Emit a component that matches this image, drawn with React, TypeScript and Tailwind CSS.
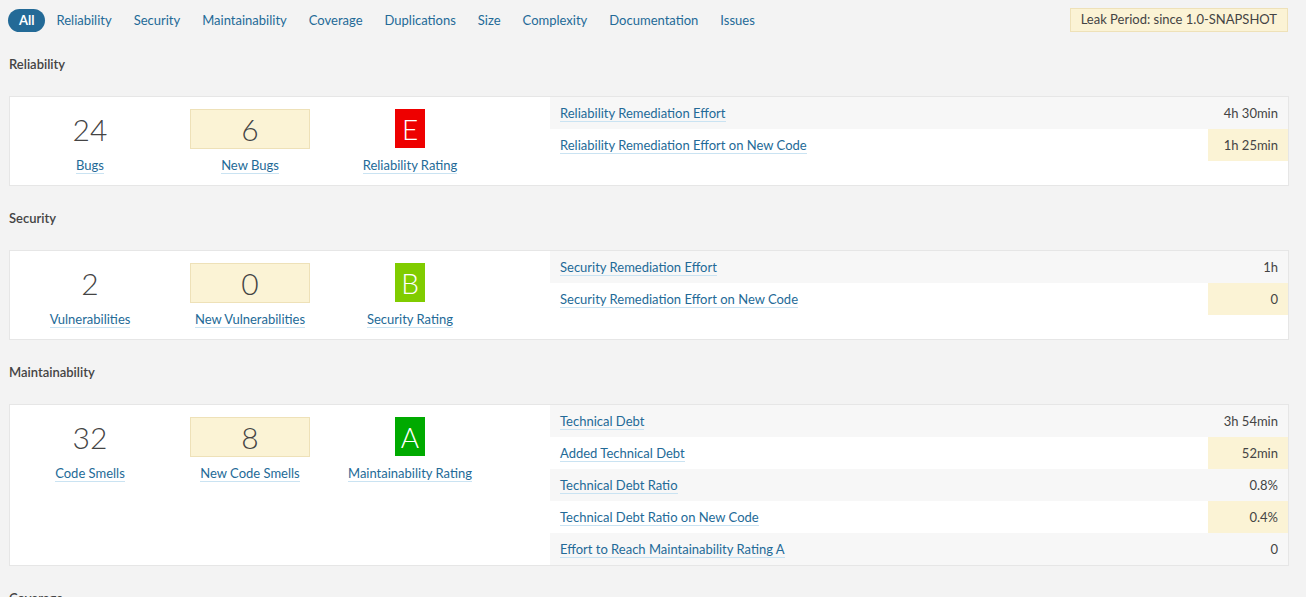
const tabs = [
  'Reliability',
  'Security',
  'Maintainability',
  'Coverage',
  'Duplications',
  'Size',
  'Complexity',
  'Documentation',
  'Issues'
]

interface Measure {
  value: string
  label: string
}

interface Row {
  label: string
  value: string
  leak?: boolean
}

interface Section {
  title: string
  total: Measure
  added: Measure
  rating: { letter: string; label: string; color: string }
  rows: Row[]
}

const sections: Section[] = [
  {
    title: 'Reliability',
    total: { value: '24', label: 'Bugs' },
    added: { value: '6', label: 'New Bugs' },
    rating: { letter: 'E', label: 'Reliability Rating', color: 'bg-[#ee0000]' },
    rows: [
      { label: 'Reliability Remediation Effort', value: '4h 30min' },
      { label: 'Reliability Remediation Effort on New Code', value: '1h 25min', leak: true }
    ]
  },
  {
    title: 'Security',
    total: { value: '2', label: 'Vulnerabilities' },
    added: { value: '0', label: 'New Vulnerabilities' },
    rating: { letter: 'B', label: 'Security Rating', color: 'bg-[#80cc00]' },
    rows: [
      { label: 'Security Remediation Effort', value: '1h' },
      { label: 'Security Remediation Effort on New Code', value: '0', leak: true }
    ]
  },
  {
    title: 'Maintainability',
    total: { value: '32', label: 'Code Smells' },
    added: { value: '8', label: 'New Code Smells' },
    rating: { letter: 'A', label: 'Maintainability Rating', color: 'bg-[#00aa00]' },
    rows: [
      { label: 'Technical Debt', value: '3h 54min' },
      { label: 'Added Technical Debt', value: '52min', leak: true },
      { label: 'Technical Debt Ratio', value: '0.8%' },
      { label: 'Technical Debt Ratio on New Code', value: '0.4%', leak: true },
      { label: 'Effort to Reach Maintainability Rating A', value: '0' }
    ]
  }
]

function Link(props: { children: React.ReactNode }) {
  return (
    <a className="border-b border-[#cae3f2] text-[#236a97] leading-[16px] cursor-pointer">
      {props.children}
    </a>
  )
}

function SectionBlock({ s }: { s: Section }) {
  return (
    <div className="pt-[22px]">
      <h3 className="px-[9px] text-[13px] font-semibold leading-5 text-[#444]">{s.title}</h3>
      <div className="ml-[9px] mr-[17px] mt-[22px] flex border border-[#e6e6e6] bg-white">
        <div className="flex w-[540px] shrink-0 items-start pt-3">
          <div className="flex w-[160px] flex-col items-center">
            <div className="flex h-10 items-center text-[30px] font-light text-[#444]">
              {s.total.value}
            </div>
            <div className="mt-[7px] text-[13px]">
              <Link>{s.total.label}</Link>
            </div>
          </div>
          <div className="flex w-[160px] flex-col items-center">
            <div className="flex h-10 w-[120px] items-center justify-center border border-[#eee1b8] bg-[#fbf3d5] text-[30px] font-light text-[#444]">
              {s.added.value}
            </div>
            <div className="mt-[7px] text-[13px]">
              <Link>{s.added.label}</Link>
            </div>
          </div>
          <div className="flex w-[160px] flex-col items-center">
            <div className="flex h-10 items-start">
              <div
                className={`flex h-[39px] w-[30px] items-center justify-center text-[28px] font-light text-white ${s.rating.color}`}
              >
                {s.rating.letter}
              </div>
            </div>
            <div className="mt-[7px] text-[13px]">
              <Link>{s.rating.label}</Link>
            </div>
          </div>
        </div>
        <div className="flex min-h-[88px] flex-1 flex-col">
          {s.rows.map((r, i) => (
            <div
              key={r.label}
              className={`flex h-8 items-center pt-[2px] text-[13px] ${i % 2 === 0 ? 'bg-[#f7f7f7]' : 'bg-white'}`}
            >
              <div className="flex-1 pl-[10px]">
                <Link>{r.label}</Link>
              </div>
              <div
                className={`-mt-[2px] flex h-8 w-20 items-center justify-end pr-[10px] pt-[2px] text-[#444] ${r.leak ? 'bg-[#fbf3d5]' : ''}`}
              >
                {r.value}
              </div>
            </div>
          ))}
        </div>
      </div>
    </div>
  )
}

export default function App() {
  return (
    <div className="min-h-screen bg-[#f3f3f3] font-['Lato',sans-serif] text-[13px] text-[#444]">
      <div className="flex items-start justify-between pl-2 pr-[18px] pt-2">
        <div className="mt-px flex h-[23px] items-center">
          <span className="flex h-[23px] items-center rounded-full bg-[#236a97] px-[11px] font-bold text-white">
            All
          </span>
          {tabs.map((t) => (
            <a key={t} className="px-[11px] pt-px text-[#236a97] cursor-pointer">
              {t}
            </a>
          ))}
        </div>
        <div className="flex h-[24px] items-center border border-[#eee1b8] bg-[#fbf3d5] px-[10px] text-[#444]">
          Leak Period: since 1.0-SNAPSHOT
        </div>
      </div>
      {sections.map((s) => (
        <SectionBlock key={s.title} s={s} />
      ))}
      <div className="pt-[22px]">
        <h3 className="px-[9px] text-[13px] font-semibold leading-5 text-[#444]">Coverage</h3>
      </div>
    </div>
  )
}
